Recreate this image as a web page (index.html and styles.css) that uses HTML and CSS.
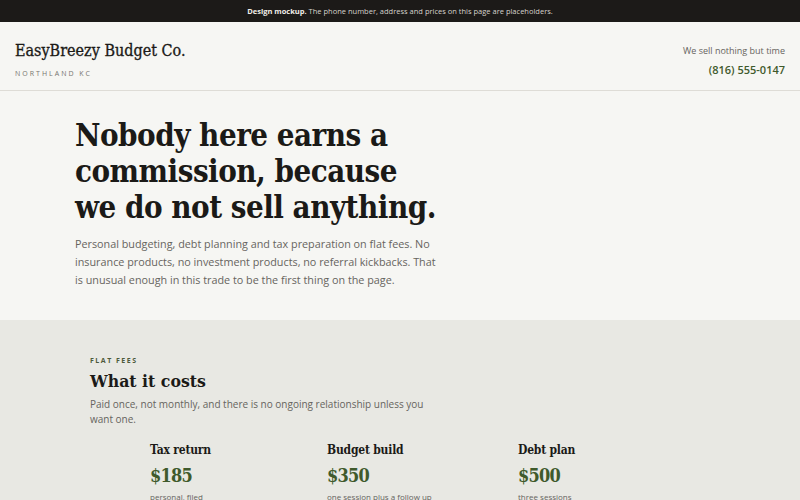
FILE: index.html
```html
<!DOCTYPE html>
<html>
<head>
  <title>EasyBreezy Budget Co.</title>
  <link rel="stylesheet" href="styles.css">
</head>
<body>
  <div class="notice"><b>Design mockup.</b> The phone number, address and prices on this page are placeholders.</div>

  <header class="site-header">
    <div class="brand">
      <div class="brand-name">EasyBreezy Budget Co.</div>
      <div class="brand-place">NORTHLAND KC</div>
    </div>
    <div class="contact">
      <div class="tagline">We sell nothing but time</div>
      <div class="phone">(816) 555-0147</div>
    </div>
  </header>

  <section class="hero">
    <h1>Nobody here earns a commission, because we do not sell anything.</h1>
    <p>Personal budgeting, debt planning and tax preparation on flat fees. No insurance products, no investment products, no referral kickbacks. That is unusual enough in this trade to be the first thing on the page.</p>
  </section>

  <section class="fees">
    <div class="eyebrow">FLAT FEES</div>
    <h2>What it costs</h2>
    <p class="lead">Paid once, not monthly, and there is no ongoing relationship unless you want one.</p>

    <div class="prices">
      <div class="price-card">
        <h3>Tax return</h3>
        <div class="amount">$185</div>
        <div class="note">personal, filed</div>
      </div>
      <div class="price-card">
        <h3>Budget build</h3>
        <div class="amount">$350</div>
        <div class="note">one session plus a follow up</div>
      </div>
      <div class="price-card">
        <h3>Debt plan</h3>
        <div class="amount">$500</div>
        <div class="note">three sessions</div>
      </div>
    </div>
  </section>
</body>
</html>
```

FILE: styles.css
```css
body {
  margin: 0;
  font-family: "Open Sans", Lato, sans-serif;
  background: #f6f6f3;
  color: #1b1a17;
}

.notice {
  background: #1c1a18;
  color: #d6d3cc;
  font-size: 7.5px;
  height: 22px;
  line-height: 23px;
  text-align: center;
}
.notice b { color: #f1eee8; }

.site-header {
  display: flex;
  justify-content: space-between;
  padding: 17px 15px 0;
  height: 51px;
  border-bottom: 1px solid #dedcd6;
}
.brand-name {
  font-family: "DejaVu Serif Condensed", "DejaVu Serif", serif;
  font-size: 16px;
  line-height: 24px;
  -webkit-text-stroke: 0.3px #1b1a17;
}
.brand-place {
  margin-top: 6px;
  font-size: 7px;
  letter-spacing: 2px;
  color: #77756f;
}
.contact {
  text-align: right;
  padding-top: 5px;
}
.tagline {
  font-size: 9px;
  color: #66645e;
}
.phone {
  margin-top: 5px;
  font-size: 11px;
  font-weight: 600;
  color: #3f5a2c;
}

.hero {
  padding: 26px 75px 30px;
  height: 173px;
}
.hero h1 {
  font-family: "DejaVu Serif Condensed", "DejaVu Serif", serif;
  font-weight: bold;
  font-size: 31px;
  line-height: 36px;
  letter-spacing: -0.5px;
  margin: 0;
  max-width: 366px;
}
.hero p {
  margin: 10px 0 0;
  max-width: 368px;
  font-size: 10.8px;
  line-height: 18px;
  color: #66645e;
}

.fees {
  background: #e8e8e3;
  padding: 36px 90px 0;
  height: 200px;
}
.eyebrow {
  font-size: 7px;
  font-weight: bold;
  letter-spacing: 1.5px;
  color: #4d5a3c;
}
.fees h2 {
  font-family: "DejaVu Serif Condensed", "DejaVu Serif", serif;
  font-size: 17.5px;
  margin: 6px 0 0;
}
.lead {
  margin: 6px 0 0;
  max-width: 335px;
  font-size: 10px;
  line-height: 15px;
  color: #66645e;
}
.prices {
  display: grid;
  grid-template-columns: 177px 191px 1fr;
  margin: 16px 0 0 60px;
}
.price-card h3 {
  font-family: "DejaVu Serif Condensed", "DejaVu Serif", serif;
  font-size: 12px;
  letter-spacing: -0.2px;
  margin: 0;
}
.amount {
  font-family: "DejaVu Serif Condensed", "DejaVu Serif", serif;
  font-weight: bold;
  font-size: 18px;
  letter-spacing: -0.8px;
  color: #3f5a2c;
  margin-top: 8px;
}
.note {
  margin-top: 5px;
  font-size: 8px;
  color: #66645e;
}
```
